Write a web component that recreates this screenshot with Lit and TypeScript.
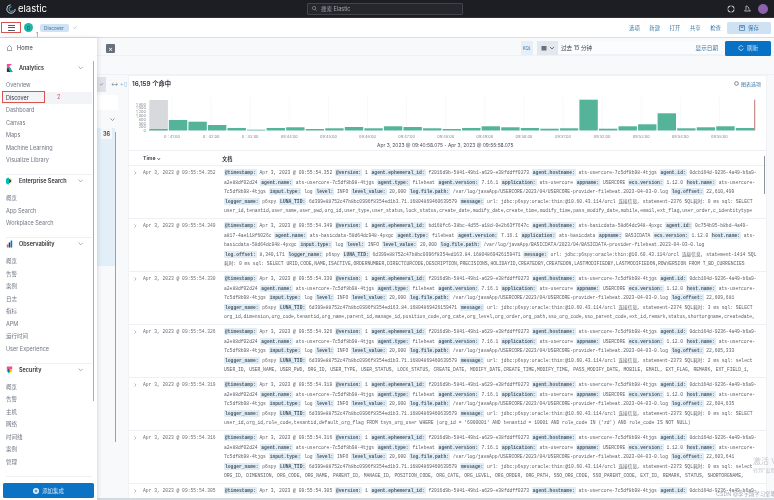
import { LitElement, html, css, svg } from "lit";
import { customElement } from "lit/decorators.js";

const chevron = html`<svg class="chev" viewBox="0 0 10 6"><path d="M1 1l4 4 4-4" fill="none" stroke="#69707d" stroke-width="1"/></svg>`;

const logos: Record<string, unknown> = {
  Analytics: html`<svg class="logo" viewBox="0 0 8 9"><path d="M1 0h6L1 5z" fill="#f04e98"/><path d="M1 5l3-2 3.5 6H1z" fill="#343741"/><path d="M4 3.2l3.5 5.6L4.6 9 2.8 5z" fill="#00bfb3"/></svg>`,
  "Enterprise Search": html`<svg class="logo" viewBox="0 0 9 9"><path d="M4 0a4.5 4.5 0 0 0 0 9z" fill="#00bfb3"/><path d="M4 2a2.5 2.5 0 0 1 0 5z" fill="#343741"/><path d="M5.5 1a4 4 0 0 1 0 7V6.5a2.2 2.2 0 0 0 0-4z" fill="#fec514"/></svg>`,
  Observability: html`<svg class="logo" viewBox="0 0 9 9"><rect x="1" y="5" width="2" height="4" fill="#f04e98"/><rect x="3.5" y="2.5" width="2" height="6.5" fill="#343741"/><rect x="6" y="0" width="2" height="9" fill="#07c"/></svg>`,
  Security: html`<svg class="logo" viewBox="0 0 9 9"><path d="M1 0h7v3.5H1z" fill="#f04e98"/><path d="M4 3.5h4C8 6 6.5 8 4 9z" fill="#fec514"/><path d="M1 3.5h3V9C2 8 1 6 1 3.5z" fill="#00bfb3"/><path d="M2.5 3.5h2V7h-1z" fill="#343741"/></svg>`,
};

const sections: [string, string[]][] = [
  ["Analytics", ["Overview", "Discover", "Dashboard", "Canvas", "Maps", "Machine Learning", "Visualize Library"]],
  ["Enterprise Search", ["概览", "App Search", "Workplace Search"]],
  ["Observability", ["概览", "告警", "案例", "日志", "指标", "APM", "运行时间", "User Experience"]],
  ["Security", ["概览", "告警", "主机", "网络", "时间线", "案例", "管理"]],
];

const barTops = [129, 120, 121.7, 125, 128, 129.7, 128, 127.3, 129, 128.3, 127, 128.3, 126.3, 127, 128.3, 129, 128, 126.3, 127.3, 128, 128.7, 128.3, 99.7, 128.7, 126.3, 124.3, 113.3, 128.3, 127.3, 126.3, 128];
const xTicks = ["0 : 41:00", "0 : 42:00", "0 : 43:00", "09:44:00", "09:45:00", "09:46:00", "09:47:00", "09:48:00", "09:49:00", "09:50:00", "09:51:00", "09:52:00", "09:53:00", "09:54:00", "09:55:00"];
const yTicks = ["1,800", "1,500", "1,200", "1,000", "800", "500", "200", "0"];

const USERCORE_ID = "f2016d9b-5841-49b1-a629-e38fddff0273";

function usercoreRow(ms: string, offset: string, stmt: string, tid: string, cost: string, verb: string, last: string): string[] {
  return [
    `[@timestamp:] Apr 3, 2023 @ 09:55:54.${ms} [@version:] 1 [agent.ephemeral_id:] ${USERCORE_ID} [agent.hostname:] ats-usercore-7c5df8b98-4tjgs [agent.id:] 0dcb164d-9236-4a49-b6a9-`,
    `a2e88df02d24 [agent.name:] ats-usercore-7c5df8b98-4tjgs [agent.type:] filebeat [agent.version:] 7.16.1 [application:] ats-usercore [appname:] USERCORE [ecs.version:] 1.12.0 [host.name:] ats-usercore-`,
    `7c5df8b98-4tjgs [input.type:] log [level:] INFO [level_value:] 20,000 [log.file.path:] /var/log/javaApp/USERCORE/2023/04/USERCORE-provider-filebeat.2023-04-03-0.log [log.offset:] ${offset}`,
    `[logger_name:] p6spy [LUNA_TID:] ${tid} [message:] url: jdbc:p6spy:oracle:thin:@10.60.43.114/orcl 连接信息, statement-${stmt} SQL耗时: ${cost} ms sql: ${verb}`,
    last,
  ];
}
const T71 = "6d399e88752c47b8bc0996f8354ed1b3.71.16804869460639579";
const T84 = "6d399e88752c47b8bc0996f8354ed163.84.16804869426159471";

const rows: { time: string; lines: string[] }[] = [
  { time: "352", lines: usercoreRow("352", "22,610,499", "2376", T71, "0", "SELECT", "user_id,tenantid,user_name,user_pwd,org_id,user_type,user_status,lock_status,create_date,modify_date,create_time,modify_time,pass_modify_date,mobile,email,ext_flag,user_order,c_identitytype") },
  {
    time: "349",
    lines: [
      "[@timestamp:] Apr 3, 2023 @ 09:55:54.349 [@version:] 1 [agent.ephemeral_id:] bd168fc6-38bc-4d55-a18d-0e2b63f7647c [agent.hostname:] ats-basicdata-58d64dc948-4pxgc [agent.id:] 0c754b95-b8bd-4a49-",
      "a817-4ae118f6026c [agent.name:] ats-basicdata-58d64dc948-4pxgc [agent.type:] filebeat [agent.version:] 7.16.1 [application:] ats-basicdata [appname:] BASICDATA [ecs.version:] 1.12.0 [host.name:] ats-",
      "basicdata-58d64dc948-4pxgc [input.type:] log [level:] INFO [level_value:] 20,000 [log.file.path:] /var/log/javaApp/BASICDATA/2023/04/BASICDATA-provider-filebeat.2023-04-03-0.log",
      `[log.offset:] 8,340,171 [logger_name:] p6spy [LUNA_TID:] ${T84} [message:] url: jdbc:p6spy:oracle:thin:@10.60.43.114/orcl 连接信息, statement-1414 SQL`,
      "耗时: 0 ms sql: SELECT URID,CODE,NAME,ISACTIVE,ORDERNUMBER,DIRECTCURCODE,DESCRIPTION,PRECISIONS,HOLIDAYID,CREATEDBY,CREATEDON,LASTMODIFIEDBY,LASTMODIFIEDON,ROWVERSION FROM T_BD_CURRENCIES",
    ],
  },
  { time: "330", lines: usercoreRow("330", "22,609,681", "2374", T84, "3", "SELECT", "org_id,dimension,org_code,tenantid,org_name,parent_id,manage_id,position_code,org_cate,org_level,org_order,org_path,sso_org_code,sso_parent_code,ext_id,remark,status,shortorgname,createdate,") },
  { time: "326", lines: usercoreRow("326", "22,605,333", "2373", T71, "2", "select", "USER_ID, USER_NAME, USER_PWD, ORG_ID, USER_TYPE, USER_STATUS, LOCK_STATUS, CREATE_DATE, MODIFY_DATE,CREATE_TIME,MODIFY_TIME, PASS_MODIFY_DATE, MOBILE, EMAIL, EXT_FLAG, REMARK, EXT_FIELD_1,") },
  { time: "319", lines: usercoreRow("319", "22,604,635", "2373", T71, "0", "SELECT", "user_id,org_id,role_code,tenantid,default_org_flag FROM tsys_org_user WHERE (org_id = '6000001' AND tenantid = 10001 AND role_code IN ('zd') AND role_code IS NOT NULL)") },
  { time: "316", lines: usercoreRow("316", "22,603,641", "2373", T71, "0", "select", "ORG_ID, DIMENSION, ORG_CODE, ORG_NAME, PARENT_ID, MANAGE_ID, POSITION_CODE, ORG_CATE, ORG_LEVEL, ORG_ORDER, ORG_PATH, SSO_ORG_CODE, SSO_PARENT_CODE, EXT_ID, REMARK, STATUS, SHORTORGNAME,") },
  { time: "305", lines: [`[@timestamp:] Apr 3, 2023 @ 09:55:54.305 [@version:] 1 [agent.ephemeral_id:] ${USERCORE_ID} [agent.hostname:] ats-usercore-7c5df8b98-4tjgs [agent.id:] 0dcb164d-9236-4a49-b6a9-`] },
];

function renderLine(line: string) {
  const parts = line.split(/(\[[^\]]+\])/).filter((p) => p);
  return html`<div class="line">${parts.map((p) => (p.startsWith("[") ? html`<span class="key">${p.slice(1, -1)}</span>` : p))}</div>`;
}

@customElement("app-root")
export class AppRoot extends LitElement {
  static styles = css`
    :host { display: block; width: 774px; height: 500px; overflow: hidden; position: relative; background: #fff; font-family: Inter, "Noto Sans CJK SC", sans-serif; color: #343741; filter: blur(0.35px); }
    * { box-sizing: border-box; }
    svg { display: block; }
    .top { height: 18px; background: #1d1e24; display: flex; align-items: center; padding: 0 6px; position: relative; border-bottom: 1px solid #30333a; }
    .brand { display: flex; align-items: center; gap: 2px; color: #fff; font-size: 9.5px; width: 301px; }
    .brand svg { width: 10px; height: 10px; }
    .search { width: 156px; height: 12px; border: 1px solid #41444c; background: #25272d; border-radius: 1px; display: flex; align-items: center; gap: 4px; padding-left: 4px; color: #a4a7ad; font-size: 5.5px; }
    .search svg { width: 5px; height: 5px; }
    .top-icons { margin-left: auto; display: flex; align-items: center; gap: 8px; }
    .top-icons svg { width: 8px; height: 8px; }
    .avatar { width: 10px; height: 10px; border-radius: 50%; background: #8b62ad; margin-left: -1px; margin-right: 0; }
    .sub { height: 20px; background: #fff; border-bottom: 1px solid #d8dde6; display: flex; align-items: center; padding: 0 3px 0 7px; font-size: 5.5px; }
    .burger { width: 7px; height: 6px; border-top: 1px solid #535966; border-bottom: 1px solid #535966; position: relative; margin: 0 9px 0 1px; }
    .burger::after { content: ""; position: absolute; left: 0; right: 0; top: 1.5px; height: 1px; background: #535966; }
    .dot { width: 9px; height: 9px; border-radius: 50%; background: #1cb5a8; color: #0e5c55; font-size: 5px; display: flex; align-items: center; justify-content: center; }
    .chip { margin-left: 6.5px; background: #cfe3f4; color: #3f6f96; border-radius: 2px; height: 8px; width: 29px; display: flex; align-items: center; justify-content: center; font-size: 4.8px; }
    .tick { margin-left: 4px; color: #b8bdc6; font-size: 6px; }
    .links { margin-left: auto; display: flex; align-items: center; gap: 9.5px; color: #3a78a8; font-size: 5.4px; }
    .save { width: 44px; height: 12px; background: #cfe2f3; border-radius: 1.5px; display: flex; align-items: center; justify-content: center; gap: 3px; margin-left: -3.5px; color: #3a78a8; }
    .save svg { width: 6px; height: 6px; }
    .body { display: flex; height: 462px; }
    .nav { width: 97px; flex: none; display: flex; flex-direction: column; background: #fff; box-shadow: 1px 0 4px rgba(60, 70, 90, 0.18); position: relative; z-index: 2; }
    .nav-scroll { flex: 1; overflow: hidden; padding-left: 6px; }
    .home { height: 19px; margin-bottom: 5px; display: flex; align-items: center; gap: 5px; padding: 0 0 0 1px; font-size: 5.6px; color: #343741; }
    .home svg { width: 5px; height: 6px; }
    .sec { padding-bottom: 7.25px; border-bottom: 1px solid #eef0f4; margin-bottom: 0; margin-right: 5px; }
    .sec-h { height: 12px; margin-bottom: 5.25px; display: flex; align-items: center; font-size: 5.5px; font-weight: 600; color: #2f3238; padding-right: 9px; }
    .logo { width: 7px; height: 8px; margin-left: 0; margin-right: 6px; }
    .chev { width: 5.5px; height: 3.4px; margin-left: auto; }
    .item { height: 12.5px; line-height: 12.5px; font-size: 5.5px; color: #6f7580; white-space: nowrap; }
    .item.on { background: #f2f4f8; color: #343741; margin: 0 0 0 -4px; padding-left: 4px; }
    .nav-foot { height: 20px; padding: 3px 3px 0; background: #fff; flex: none; }
    .add { height: 15px; background: #0b72c4; color: #d6e8f7; border-radius: 1.5px; display: flex; align-items: center; justify-content: center; gap: 3px; font-size: 5.4px; }
    .add svg { width: 6px; height: 6px; }
    .nav-bar { position: absolute; left: 93px; top: 23px; width: 1px; height: 340px; background: #a7acb5; }
    .main { flex: 1; min-width: 0; display: flex; flex-direction: column; background: #f8f9fb; }
    .qbar { height: 18px; flex: none; display: flex; align-items: center; padding: 3px 3px 0 9px; border-bottom: 1px solid #eff1f5; font-size: 5.6px; }
    .close { width: 9px; height: 9px; background: #69707d; color: #fff; display: flex; align-items: center; justify-content: center; border-radius: 1px; font-size: 7px; line-height: 1; }
    .qfill { flex: 1; }
    .kql { width: 12px; height: 14px; background: #e6eff8; color: #3a78a8; font-size: 4.4px; display: flex; align-items: center; justify-content: center; }
    .time { width: 184px; height: 14px; margin-left: 4px; background: #fbfcfd; display: flex; align-items: center; color: #3f434b; border-bottom: 1px solid #f0f2f5; }
    .cal { width: 21px; height: 14px; background: #e3e7ee; display: flex; align-items: center; justify-content: center; gap: 2px; margin-right: 3px; flex: none; }
    .cal svg { width: 6px; height: 6px; }
    .cal-c { width: 3px; height: 2px; }
    .show { margin-left: auto; margin-right: 3px; color: #3a78a8; }
    .refresh { width: 46px; height: 15px; margin-left: 4px; background: #0771c5; color: #d8e9f8; border-radius: 1.5px; display: flex; align-items: center; justify-content: center; gap: 3px; flex: none; }
    .refresh svg { width: 6px; height: 6px; }
    .fbar { height: 19px; flex: none; border-bottom: 1px solid #eff1f5; }
    .content { flex: 1; min-height: 0; display: flex; overflow: hidden; }
    .strip { width: 31px; flex: none; display: flex; flex-direction: column; position: relative; }
    .strip-top { height: 16px; margin-top: 1px; display: flex; align-items: center; }
    .collapse { width: 9px; height: 15px; background: #dfe2e8; color: #69707d; font-size: 5px; display: flex; align-items: center; justify-content: center; flex: none; }
    .arrows { margin-left: 5px; font-size: 5.5px; color: #69707d; white-space: nowrap; }
    .arrows b { color: #7fb1dc; font-weight: 400; }
    .fsearch { width: 21px; height: 15px; margin-top: 3px; background: #fff; }
    .fdrop { height: 18px; width: 18px; display: flex; align-items: center; justify-content: flex-end; flex: none; }
    .fdrop svg { width: 5px; height: 3px; }
    .fblue { width: 18px; height: 138px; background: #e2eef8; position: relative; }
    .count { position: absolute; left: 4px; top: 0; width: 11px; height: 11px; background: #f6f7f9; color: #343741; font-size: 5.5px; font-weight: 600; display: flex; align-items: center; justify-content: center; }
    .fline { position: absolute; left: 18px; top: 57px; width: 1px; height: 310px; background: #9a9fa8; }
    .panel { width: 639px; flex: none; background: #fff; border: 1px solid #f0f2f5; border-width: 1px 1px 0; display: flex; flex-direction: column; position: relative; overflow: hidden; margin-top: 0; }
    .phead { height: 15px; flex: none; display: flex; align-items: center; padding: 0 5px 0 3px; margin-top: 0; }
    .hits { font-size: 6.3px; color: #343741; font-weight: 600; }
    .opts { margin-left: auto; display: flex; align-items: center; gap: 2px; color: #3a78a8; font-size: 5px; }
    .opts svg { width: 5px; height: 5px; }
    .chart { width: 638px; height: 59px; flex: none; }
    .chart text { font-family: Inter, sans-serif; font-size: 3.9px; fill: #868b94; }
    .chart .range { font-size: 4.9px; fill: #4d5159; }
    .thead { height: 16px; flex: none; display: flex; align-items: center; border-top: 1px solid #eef0f4; border-bottom: 1px solid #eef0f4; font-size: 5.2px; font-weight: 600; color: #343741; padding-left: 14px; }
    .thead .t { width: 79px; }
    .row { height: 53px; flex: none; display: flex; padding-top: 2px; border-bottom: 1px solid #eef0f4; padding-left: 5px; overflow: hidden; }
    .row-chev { width: 9px; flex: none; height: 9.5px; display: flex; align-items: center; }
    .row-chev svg { width: 2.5px; height: 4px; }
    .ts { width: 81px; flex: none; font: 4.67px/9.5px "Liberation Mono", monospace; color: #6a6e77; white-space: nowrap; }
    .doc { min-width: 0; flex: 1; font: 4.67px/9.5px "Liberation Mono", "Noto Sans CJK SC", monospace; color: #5d6068; }
    .line { height: 9.5px; white-space: nowrap; overflow: hidden; }
    .key { background: #e1edf6; color: #48555f; padding: 1px; border-radius: 1px; font-weight: 700; }
    .scroll { position: absolute; left: 635px; top: 80px; width: 1px; height: 38px; background: #8f949c; }
    .foot { height: 2px; flex: none; background: #d5d9e0; }
    .mark { position: absolute; left: 2px; top: 91px; width: 43px; height: 12px; border: 1px solid #d9534f; z-index: 5; }
    .mark.b { left: 1px; top: 22px; width: 20px; height: 11px; }
    .num { position: absolute; color: #d9534f; font-size: 5.5px; z-index: 5; line-height: 1; }
    .n1 { left: 36px; top: 33px; }
    .n2 { left: 57px; top: 95px; }
    .wm { position: absolute; color: #c4c7cc; z-index: 6; white-space: nowrap; line-height: 1; }
    .w1 { left: 753px; top: 457px; font-size: 8px; }
    .w2 { left: 753px; top: 468px; font-size: 5px; }
    .w3 { left: 716px; top: 492px; font-size: 5.4px; color: #a9adb4; }
  `;

  private renderChart() {
    const base = 130.5 - 91;
    const off = 91;
    const lx = (i: number) => 149.3 - 129 + i * 19.55;
    return html`<svg class="chart" viewBox="0 0 638 59">
      ${xTicks.map((_, i) => svg`<line x1=${43 + i * 39.1} x2=${43 + i * 39.1} y1="6" y2=${base} stroke="#f1f3f6" stroke-width="0.6"/>`)}
      ${svg`<rect x=${lx(0)} y=${100 - off} width="18.6" height=${base - 9} fill="#d8d9dc"/>`}
      ${barTops.map((t, i) => svg`<rect x=${lx(i)} y=${t - off} width="18.4" height=${base - (t - off)} fill="#54b399"/>`)}
      ${svg`<rect x=${625.3} y=${99.7 - off} width="0.9" height=${base - 8.7} fill="#b5655e"/>`}
      ${yTicks.map((t, i) => svg`<text x="17" y=${14.5 + i * 3.8} text-anchor="end">${t}</text>`)}
      ${xTicks.map((t, i) => svg`<text x=${43 + i * 39.1} y="46.5" text-anchor="middle">${t}</text>`)}
      ${svg`<text class="range" x="384.5" y="56" text-anchor="end">Apr 3, 2023 @ 09:40:58.075 - Apr 3, 2023 @ 09:55:58.075</text>`}
    </svg>`;
  }

  render() {
    return html`
      <div class="top">
        <div class="brand">
          <svg viewBox="0 0 10 10"><circle cx="5" cy="5" r="4.2" fill="none" stroke="#d9e4ee" stroke-width="0.9" stroke-dasharray="19 8"/><path d="M5.5 2.8a2.3 2.3 0 1 0 2 3.2" fill="none" stroke="#3fbfd9" stroke-width="0.9"/></svg>
          <span>elastic</span>
        </div>
        <div class="search">
          <svg viewBox="0 0 6 6"><circle cx="2.5" cy="2.5" r="2" fill="none" stroke="#a4a7ad" stroke-width="0.7"/><path d="M4 4l1.6 1.6" stroke="#a4a7ad" stroke-width="0.7"/></svg>
          搜索 Elastic
        </div>
        <div class="top-icons">
          <svg viewBox="0 0 8 8"><circle cx="4" cy="4" r="3.2" fill="none" stroke="#e2e4e8" stroke-width="1"/><path d="M4 0v8M0 4h8" stroke="#1d1e24" stroke-width="1"/></svg>
          <svg viewBox="0 0 8 8"><path d="M3 1c2 0 3 1.500 3 3.500l1.500 1.500H1.500L3 4.500z" fill="none" stroke="#c9ccd2" stroke-width="0.8"/></svg>
          <div class="avatar"></div>
        </div>
      </div>
      <div class="sub">
        <div class="burger"></div>
        <div class="dot">D</div>
        <div class="chip">Discover</div>
        <div class="tick">✓</div>
        <div class="links">
          <span>选项</span><span>新建</span><span>打开</span><span>共享</span><span>检查</span>
          <div class="save"><svg viewBox="0 0 6 6"><path d="M.5.5h5v5h-5zM2 .5v2h2v-2" fill="none" stroke="#3a78a8" stroke-width="0.7"/></svg>保存</div>
        </div>
      </div>
      <div class="body">
        <div class="nav">
          <div class="nav-scroll">
            <div class="home">
              <svg viewBox="0 0 5 6"><path d="M.4 2.600L2.500.5l2.100 2.100v3H.4z" fill="none" stroke="#535966" stroke-width="0.6"/></svg>
              Home
            </div>
            ${sections.map(
              ([title, items]) => html`<div class="sec">
                <div class="sec-h">${logos[title]}${title}${chevron}</div>
                ${items.map((it) => html`<div class="item ${it === "Discover" ? "on" : ""}">${it}</div>`)}
              </div>`
            )}
            <div class="sec-h">Management</div>
          </div>
          <div class="nav-foot">
            <div class="add">
              <svg viewBox="0 0 6 6"><circle cx="3" cy="3" r="3" fill="#e6f0f9"/><path d="M3 1.500v3M1.500 3h3" stroke="#0b72c4" stroke-width="0.8"/></svg>
              添加集成
            </div>
          </div>
          <div class="nav-bar"></div>
        </div>
        <div class="main">
          <div class="qbar">
            <div class="close">×</div>
            <div class="qfill"></div>
            <div class="kql">KQL</div>
            <div class="time">
              <div class="cal"><svg viewBox="0 0 6 6"><path d="M.5 1h5v4.500h-5z" fill="#69707d"/></svg><svg class="cal-c" viewBox="0 0 6 4"><path d="M1 1l2 2 2-2" fill="none" stroke="#69707d"/></svg></div>
              过去 15 分钟
              <span class="show">显示日期</span>
            </div>
            <div class="refresh"><svg viewBox="0 0 6 6"><path d="M5 1.800A2.300 2.300 0 1 0 5.300 3.500" fill="none" stroke="#d8e9f8" stroke-width="0.8"/></svg>刷新</div>
          </div>
          <div class="fbar"></div>
          <div class="content">
            <div class="strip">
              <div class="strip-top"><div class="collapse">✓</div><span class="arrows">↔ <b>+▯</b></span></div>
              <div class="fsearch"></div>
              <div class="fdrop"><svg viewBox="0 0 5 3"><path d="M.5.500l2 2 2-2" fill="none" stroke="#69707d" stroke-width="0.7"/></svg></div>
              <div class="fblue"><div class="count">36</div></div>
              <div class="fline"></div>
            </div>
            <div class="panel">
              <div class="phead">
                <div class="hits">16,159 个命中</div>
                <div class="opts"><svg viewBox="0 0 6 6"><circle cx="3" cy="3" r="2.200" fill="none" stroke="#69707d" stroke-width="1"/></svg>图表选项</div>
              </div>
              ${this.renderChart()}
              <div class="thead"><span class="t">Time ⌄</span><span>文档</span></div>
              ${rows.map(
                (r) => html`<div class="row">
                  <div class="row-chev"><svg viewBox="0 0 3 5"><path d="M.5.500l2 2-2 2" fill="none" stroke="#69707d" stroke-width="0.6"/></svg></div>
                  <div class="ts">Apr 3, 2023 @ 09:55:54.${r.time}</div>
                  <div class="doc">${r.lines.map(renderLine)}</div>
                </div>`
              )}
              <div class="scroll"></div>
            </div>
          </div>
          <div class="foot"></div>
        </div>
      </div>
      <div class="mark"></div>
      <div class="mark b"></div>
      <div class="num n1">1</div>
      <div class="num n2">2</div>
      <div class="wm w1">激活 V</div>
      <div class="wm w2">转到"设置"</div>
      <div class="wm w3">CSDN @李宇翔学习堂笔记</div>
    `;
  }
}
